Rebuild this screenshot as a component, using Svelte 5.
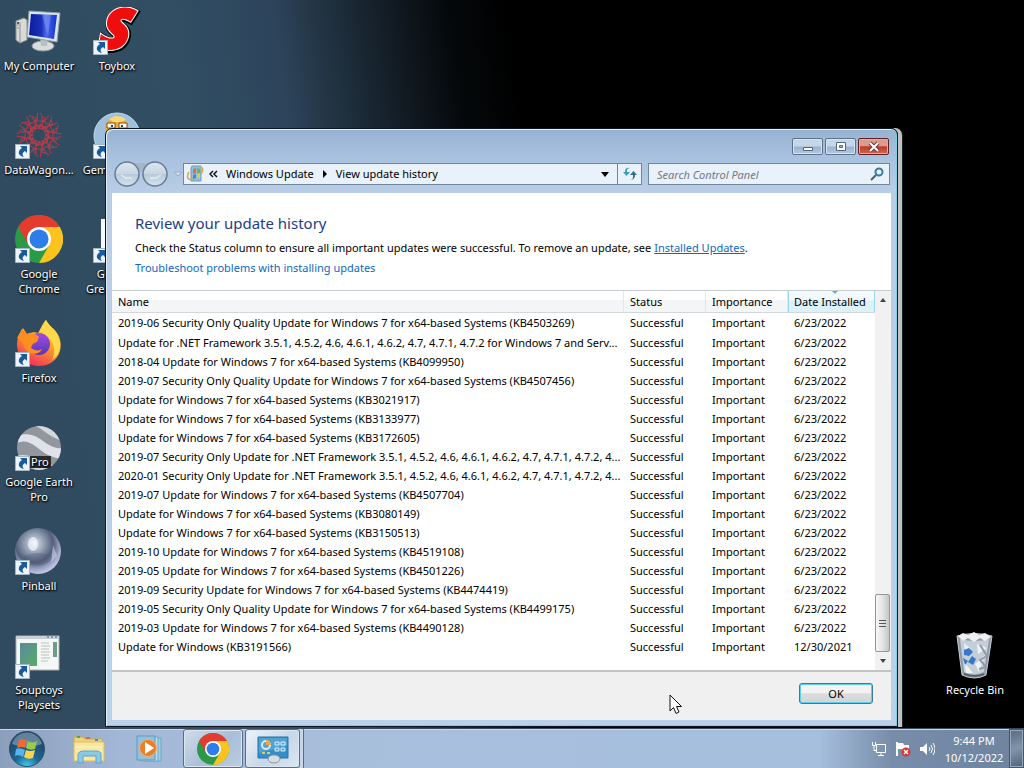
<script>
  let icons = [
    { name: "My Computer", icon: "computer" },
    { name: "DataWagon...", icon: "datawagon", shortcut: true },
    { name: "Google Chrome", icon: "chrome", shortcut: true },
    { name: "Firefox", icon: "firefox", shortcut: true },
    { name: "Google Earth Pro", icon: "earth", shortcut: true },
    { name: "Pinball", icon: "pinball", shortcut: true },
    { name: "Souptoys Playsets", icon: "souptoys", shortcut: true },
    { name: "Toybox", icon: "toybox", shortcut: true },
    { name: "Gemsweeper", icon: "gem", shortcut: true },
    { name: "Genesis Greatest Hit", icon: "page", shortcut: true },
  ];

  let names = [
    "2019-06 Security Only Quality Update for Windows 7 for x64-based Systems (KB4503269)",
    "Update for .NET Framework 3.5.1, 4.5.2, 4.6, 4.6.1, 4.6.2, 4.7, 4.7.1, 4.7.2 for Windows 7 and Serv...",
    "2018-04 Update for Windows 7 for x64-based Systems (KB4099950)",
    "2019-07 Security Only Quality Update for Windows 7 for x64-based Systems (KB4507456)",
    "Update for Windows 7 for x64-based Systems (KB3021917)",
    "Update for Windows 7 for x64-based Systems (KB3133977)",
    "Update for Windows 7 for x64-based Systems (KB3172605)",
    "2019-07 Security Only Update for .NET Framework 3.5.1, 4.5.2, 4.6, 4.6.1, 4.6.2, 4.7, 4.7.1, 4.7.2, 4...",
    "2020-01 Security Only Update for .NET Framework 3.5.1, 4.5.2, 4.6, 4.6.1, 4.6.2, 4.7, 4.7.1, 4.7.2, 4...",
    "2019-07 Update for Windows 7 for x64-based Systems (KB4507704)",
    "Update for Windows 7 for x64-based Systems (KB3080149)",
    "Update for Windows 7 for x64-based Systems (KB3150513)",
    "2019-10 Update for Windows 7 for x64-based Systems (KB4519108)",
    "2019-05 Update for Windows 7 for x64-based Systems (KB4501226)",
    "2019-09 Security Update for Windows 7 for x64-based Systems (KB4474419)",
    "2019-05 Security Only Quality Update for Windows 7 for x64-based Systems (KB4499175)",
    "2019-03 Update for Windows 7 for x64-based Systems (KB4490128)",
    "Update for Windows (KB3191566)",
  ];

  let updates = names.map((name, i) => ({
    name,
    status: "Successful",
    importance: "Important",
    date: i == names.length - 1 ? "12/30/2021" : "6/23/2022",
  }));

  let search = "";
</script>

{#snippet chrome()}
  <circle cx="24" cy="24" r="24" fill="#2a9a48" />
  <path d="M24 12H44.800A24 24 0 0 1 24 48L34.400 30Z" fill="#fcc31e" />
  <path d="M3.200 12A24 24 0 0 1 44.800 12H24L13.600 30Z" fill="#e33b2e" />
  <circle cx="24" cy="24" r="12" fill="#fff" />
  <circle cx="24" cy="24" r="9.500" fill="#2f7de8" />
{/snippet}

{#snippet art(kind)}
  {#if kind == "computer"}
    <path d="M1 14 9 11 12 13V33L5 36 1 33Z" fill="#d8dad8" stroke="#8b9093" />
    <path d="M5 15V36M2 18H4M2 21H4" stroke="#899094" />
    <circle cx="3" cy="16" r="1" fill="#333" />
    <ellipse cx="28" cy="39" rx="11" ry="5" fill="#d9dddd" stroke="#929a9e" />
    <path d="M25 30H33L32 39H26Z" fill="#b9c0c3" />
    <path d="M14 4 45 6 42 35 12 30Z" fill="#dce5e9" stroke="#8fa2ae" />
    <path d="M16 7 42 8 39 32 14 28Z" fill="url(#screen)" />
    <path d="M27 8 36 8 33 29Z" fill="#aebdff" opacity=".35" />
  {:else if kind == "toybox"}
    <g transform="skewX(-10)">
      <text x="14" y="42" class="logo-s shade">S</text>
      <text x="13" y="41" class="logo-s rim">S</text>
      <text x="13" y="41" class="logo-s">S</text>
    </g>
  {:else if kind == "datawagon"}
    <g fill="none" stroke="#b33b4a" stroke-width="1">
      {#each [0, 30, 60, 90, 120, 150, 180, 210, 240, 270, 300, 330] as angle}
        <path d="M24 17 30 8 25 2M18 9 29 11 34 4M24 17 17 6M19 14 31 16M20 19 27 13" transform="rotate({angle} 24 24)" />
      {/each}
    </g>
  {:else if kind == "chrome"}
    {@render chrome()}
  {:else if kind == "firefox"}
    <path d="M31 1C34 7 39 9 42 14C46 20 47 28 44 35C40 43 33 47 24 47C12 47 2 38 2 25C2 20 4 15 8 9L12 15C17 13 20 13 23 14C26 10 27 5 31 1Z" fill="url(#fox)" />
    <circle cx="24" cy="25" r="11" fill="url(#purple)" />
    <path d="M2 19 7 10 12 15C17 13 21 15 24 18L22 23C18 24 17 26 16 29C20 32 24 32 27 30C24 36 16 36 12 32C8 29 9 23 6 22Z" fill="#ff8e20" />
    <path d="M31 1C34 8 42 12 44 20C47 28 44 37 37 41C42 31 38 22 31 16C26 14 25 11 24 13C26 8 29 6 31 1Z" fill="#ffd84b" />
  {:else if kind == "earth"}
    <clipPath id="globe"><circle cx="24" cy="25" r="22" /></clipPath>
    <g clip-path="url(#globe)">
      <path d="M0 0H48V48H0Z" fill="#92979d" />
      <path d="M0 13C12 9 20 12 28 18S42 26 48 25V36C34 35 27 28 20 23S8 17 0 21Z" fill="#dfe3e9" />
      <path d="M17 2C27 4 33 14 48 18V8L30 0Z" fill="#d3d8df" />
      <path d="M0 33C12 30 18 34 26 39S40 42 48 38V48H0Z" fill="#d8dce2" />
    </g>
    <path d="M15 33H36V45H15Z" fill="#292b2c" />
    <text x="16" y="43" class="pro">Pro</text>
  {:else if kind == "pinball"}
    <circle cx="23" cy="24" r="23" fill="url(#ball)" />
    <path d="M8 30C18 24 29 26 38 29C35 40 14 43 8 30Z" fill="#4b5873" opacity=".35" />
    <path d="M38 18 42 29 36 35Z" fill="#c8d0e8" opacity=".6" />
    <ellipse cx="18" cy="17" rx="5" ry="7" fill="#fff" opacity=".6" />
  {:else if kind == "souptoys"}
    <path d="M1 5H44V39H1Z" fill="#f5f7f5" stroke="#a8afb2" />
    <path d="M2 5H44V8H2Z" fill="#c6d0d6" />
    <path d="M32 6H34M36 6H38M40 6H42" stroke="#505b65" />
    <path d="M5 12H22V35H5Z" fill="url(#picture)" />
    <path d="M26 12H34M26 15H35M26 18H34M26 21H35M26 24H34M26 27H35M26 30H33" stroke="#bcc1be" />
    <path d="M38 11H42V26H38Z" fill="#6e9c86" />
  {:else if kind == "gem"}
    <circle cx="24" cy="25" r="23" fill="#9fc0dc" stroke="#c5dceb" />
    <path d="M12 18C13 2 36 0 36 20L31 28H16Z" fill="#ecae36" />
    <path d="M16 8 22 5 30 6 33 9 28 11 20 11Z" fill="#f8d879" />
    <path d="M14 12H22V17H14ZM26 12H34V17H26Z" fill="#fff" stroke="#8b4615" />
    <circle cx="19" cy="15" r="1" /><circle cx="29" cy="15" r="1" />
  {:else if kind == "page"}
    <path d="M8 4H36V44H8Z" fill="#f8f9fb" />
  {:else if kind == "bin"}
    <path d="M6 5 11 44Q24 50 35 44L41 5Q24 0 6 5Z" fill="#8f9ba5" stroke="#c5cbcf" />
    <path d="M9 8 13 41Q23 46 33 41L38 8Q24 12 9 8Z" fill="#c3ced8" />
    <path d="M7 5 12 2 17 4 23 1 28 4 34 2 40 6 34 10 29 7 23 11 17 7 12 10Z" fill="#eef1f2" />
    <path d="M13 12 20 18 15 26ZM26 13 36 17 27 23ZM13 31 22 42 15 42ZM34 24 28 41 24 33Z" fill="#edf2f6" />
    <path d="M29 14 36 25 29 29 35 36 28 38" fill="none" stroke="#8e9da8" stroke-width="2" />
    <path d="M13 19 18 17 22 21 18 25 13 24ZM21 25 25 28 22 34 17 31ZM12 27 17 30 14 34Z" fill="#3976c8" />
    <path d="M13 43Q24 47 33 43" fill="none" stroke="#5c646a" stroke-width="2" />
  {/if}
{/snippet}

{#snippet desktopIcon(item)}
  <button class="desktop-icon">
    <svg width="48" height="48" viewBox="0 0 48 48" aria-hidden="true">
      {@render art(item.icon)}
      {#if item.shortcut}
        <path d="M.5 33.500H14.500V47.500H.5Z" fill="#eef4fa" stroke="#a4b5c6" />
        <path d="M5 35H12V42L10 40C7 42 7 44 9 46C3 45 2 40 7 37Z" fill="#195a9c" />
      {/if}
    </svg>
    <span>{item.name}</span>
  </button>
{/snippet}

<svg class="defs" width="0" height="0" aria-hidden="true">
  <defs>
    <linearGradient id="screen"><stop stop-color="#0b1b9c" /><stop offset=".45" stop-color="#1b32b9" /><stop offset=".6" stop-color="#4a68e6" /><stop offset="1" stop-color="#1332d0" /></linearGradient>
    <linearGradient id="fox" x1=".8" x2=".3" y2="1"><stop stop-color="#fff14d" /><stop offset=".5" stop-color="#ff9a25" /><stop offset="1" stop-color="#f52b61" /></linearGradient>
    <linearGradient id="purple" x2="0" y2="1"><stop stop-color="#a44be2" /><stop offset="1" stop-color="#5539b5" /></linearGradient>
    <radialGradient id="ball" cx=".42" cy=".34" r=".66"><stop stop-color="#e4eaf3" /><stop offset=".3" stop-color="#98a4b8" /><stop offset=".62" stop-color="#525f7a" /><stop offset=".85" stop-color="#9fa5c9" /><stop offset="1" stop-color="#c0c6e2" /></radialGradient>
    <linearGradient id="picture" x2="1" y2="1"><stop stop-color="#5b89a1" /><stop offset="1" stop-color="#59ac64" /></linearGradient>
    <radialGradient id="orb" cx=".5" cy="1" r=".9"><stop stop-color="#3fd0ee" /><stop offset=".4" stop-color="#1d6795" /><stop offset="1" stop-color="#1f4360" /></radialGradient>
    <linearGradient id="nav" x2="0" y2="1"><stop stop-color="#dde6ee" /><stop offset=".48" stop-color="#c9d6e3" /><stop offset=".52" stop-color="#b9cad9" /><stop offset="1" stop-color="#d4e2ed" /></linearGradient>
  </defs>
</svg>

<div class="screen">
  <main class="desktop">
    <div class="icon-grid">
      {#each icons as item}
        {@render desktopIcon(item)}
      {/each}
    </div>
    <div class="icon-grid right">
      {@render desktopIcon({ name: "Recycle Bin", icon: "bin" })}
    </div>

    <section class="window" aria-label="View update history">
      <header class="titlebar">
        <button aria-label="Minimize"><svg width="14" height="12"><path d="M2.500 6.500H11.500V9.500H2.500Z" fill="#fff" stroke="#56677b" /></svg></button>
        <button aria-label="Maximize"><svg width="14" height="12"><path d="M2.500 1.500H11.500V9.500H2.500Z" fill="#fff" stroke="#56677b" /><path d="M5.500 4.500H8.500V6.500H5.500Z" fill="#9eb7d3" stroke="#56677b" /></svg></button>
        <button class="close" aria-label="Close"><svg width="14" height="12"><path d="M3 2 11 10M11 2 3 10" stroke="#6d3a40" stroke-width="4" /><path d="M3 2 11 10M11 2 3 10" stroke="#fff" stroke-width="2" /></svg></button>
      </header>

      <nav class="navbar">
        <div class="history">
          <button aria-label="Back and forward">
            <svg width="54" height="26" aria-hidden="true">
              <path d="M13 2H41V8L27 11 13 8Z" fill="#a3b6ca" />
              <circle cx="13" cy="13" r="12" fill="url(#nav)" stroke="#667d96" stroke-width="1.500" />
              <circle cx="41" cy="13" r="12" fill="url(#nav)" stroke="#667d96" stroke-width="1.500" />
              <path d="M7 14 12 17H18M47 14 42 17H36" fill="none" stroke="#dbe5ee" stroke-width="2" />
            </svg>
          </button>
          <button aria-label="Recent pages"><svg width="10" height="6"><path d="M1.500 1H8.500L5 5Z" fill="#d4e0ed" stroke="#9bacc1" /></svg></button>
        </div>
        <div class="address">
          <svg width="18" height="18" viewBox="0 0 18 18" aria-hidden="true">
            <path d="M6 1H15V16H5V3Z" fill="#91bdde" stroke="#6d9cc3" />
            <path d="M7 4 10 3V8L7 9Z" fill="#d67439" /><path d="M11 3 14 4V8L11 8Z" fill="#71b447" />
            <path d="M7 10 10 9V13L7 14Z" fill="#408ec5" /><path d="M11 9H14V13H11Z" fill="#eac741" />
            <path d="M7 14C2 16 0 12 3 7M13 2C17 2 18 5 15 9" fill="none" stroke="#e5a646" stroke-width="1.500" />
          </svg>
          <button class="crumb" aria-label="Parent folders"><svg width="9" height="8"><path d="M4 1 1 4 4 7M8 1 5 4 8 7" fill="none" stroke="#111" stroke-width="1.500" /></svg></button>
          <button class="crumb">Windows Update</button>
          <svg width="6" height="8" aria-hidden="true"><path d="M1 0 5 4 1 8Z" /></svg>
          <button class="crumb">View update history</button>
          <button class="drop" aria-label="Previous locations"><svg width="8" height="5"><path d="M0 0H8L4 5Z" /></svg></button>
          <button class="refresh" aria-label="Refresh">
            <svg width="14" height="14">
              <path d="M7 1Q4 1 4 4V5H7L3.500 9 0 5H2Q2 0 7 1Z" fill="#3b9cc4" />
              <path d="M7 13Q10 13 10 10V8H7L10.500 4 14 8H12Q12 13 7 13Z" fill="#2d6d9b" />
            </svg>
          </button>
        </div>
        <label class="search">
          <input type="search" aria-label="Search Control Panel" placeholder="Search Control Panel" bind:value={search} />
          <svg width="14" height="14" aria-hidden="true"><circle cx="9" cy="5" r="3.500" fill="#e5f2fb" stroke="#3a7c99" stroke-width="2" /><path d="M6 8 1 13" stroke="#3b6685" stroke-width="2" /></svg>
        </label>
      </nav>

      <div class="content">
        <div class="intro">
          <h1>Review your update history</h1>
          <p>Check the Status column to ensure all important updates were successful. To remove an update, see <a class="underlined" href="#installed">Installed Updates</a>.</p>
          <p><a href="#troubleshoot">Troubleshoot problems with installing updates</a></p>
        </div>
        <div class="list">
          <table>
            <colgroup><col /><col class="mid" /><col class="mid" /><col class="date" /></colgroup>
            <thead>
              <tr>
                <th>Name</th>
                <th>Status</th>
                <th>Importance</th>
                <th class="sorted" aria-sort="descending">Date Installed</th>
              </tr>
            </thead>
            <tbody>
              {#each updates as update}
                <tr>
                  <td>{update.name}</td>
                  <td>{update.status}</td>
                  <td>{update.importance}</td>
                  <td>{update.date}</td>
                </tr>
              {/each}
            </tbody>
          </table>
          <div class="scrollbar">
            <button aria-label="Scroll up"><svg width="8" height="4"><path d="M1 4 4 0 7 4Z" fill="#444" /></svg></button>
            <div class="thumb"><i></i><i></i><i></i></div>
            <button aria-label="Scroll down"><svg width="8" height="4"><path d="M1 0H7L4 4Z" fill="#444" /></svg></button>
          </div>
        </div>
        <footer><button class="ok">OK</button></footer>
      </div>
    </section>
  </main>

  <footer class="taskbar">
    <button class="start" aria-label="Start">
      <svg width="38" height="38" viewBox="0 0 38 38">
        <circle cx="19" cy="19" r="17.500" fill="url(#orb)" stroke="#304e68" />
        <path d="M4 14A15.500 15.500 0 0 1 34 14Q19 20 4 14Z" fill="#c4dfec" opacity=".4" />
        <path d="M11 10Q15 8 19 11L17 18Q13 16 9 18Z" fill="#ee6a31" />
        <path d="M20 11Q24 14 29 11L27 19Q22 21 18 18Z" fill="#9acb49" />
        <path d="M8 19Q12 17 17 20L15 27Q11 24 7 26Z" fill="#5bb3eb" />
        <path d="M18 20Q22 22 27 20L25 28Q20 30 16 27Z" fill="#fbd44c" />
      </svg>
    </button>
    <button class="task" aria-label="Windows Explorer">
      <svg width="34" height="32" viewBox="0 0 34 32">
        <path d="M2 4H11L13 6H30V27H2Z" fill="#eed27d" stroke="#cda950" />
        <path d="M5 3H8V5H5Z" fill="#49a852" /><path d="M14 4H18V6H14Z" fill="#d66b4c" /><path d="M23 6H26V8H23Z" fill="#4a8cc4" />
        <path d="M2 9H32V28H2Z" fill="#f7e7a0" stroke="#ddbe62" />
        <path d="M4 14H30M4 18H30" stroke="#fff5c9" />
        <path d="M6 30V21Q7 18 11 18H24Q29 18 29 21V30H24V23H11V30Z" fill="#8bc8e5" stroke="#5da4c8" />
      </svg>
    </button>
    <button class="task" aria-label="Windows Media Player">
      <svg width="26" height="28" viewBox="0 0 26 28">
        <path d="M9 3H25V26H9Z" fill="#a1cce4" stroke="#6ca6ca" /><path d="M5 2H22V26H5Z" fill="#bbdbeb" stroke="#71aacd" /><path d="M1 1H19V25H1Z" fill="#93c0dd" stroke="#5c99c2" />
        <circle cx="12" cy="13" r="8.500" fill="#eb7e28" stroke="#f3b376" /><path d="M9 7 18 13 9 19Z" fill="#fff" />
      </svg>
    </button>
    <button class="task open" aria-label="Google Chrome"><svg width="32" height="32" viewBox="0 0 48 48">{@render chrome()}</svg></button>
    <button class="task open active" aria-label="Control Panel">
      <svg width="32" height="30" viewBox="0 0 32 30">
        <path d="M1 3H31V24H1Z" fill="#368ec8" stroke="#2676a9" /><path d="M2 4H30V12L2 19Z" fill="#63b2dc" opacity=".6" />
        <circle cx="9" cy="11" r="4" fill="none" stroke="#d6eef7" stroke-width="2" /><path d="M9 11V6A5 5 0 0 1 14 11Z" fill="#f4a544" />
        <path d="M18 8H22V11H18ZM24 8H28V11H24ZM18 14H22V17H18ZM24 14H28V17H24Z" fill="#5ba8d3" stroke="#d8effc" />
        <path d="M5 19H8M10 19H13" stroke="#e7c85d" stroke-width="2" />
        <ellipse cx="17" cy="25" rx="6" ry="4" fill="#d9dce0" stroke="#8d969d" />
      </svg>
    </button>
    <span class="stack"></span>
    <div class="tray">
      <button aria-label="Network"><svg width="16" height="16"><path d="M5.500 3.500H14.500V11.500H5.500ZM7 14.500H13M10 11.500V14.500M1.500 1V4.500H4.500V1M3 4.500V9.500H5" fill="none" stroke="#fff" /></svg></button>
      <button aria-label="Action Center"><svg width="16" height="16"><path d="M2 1V15" stroke="#fff" stroke-width="2" /><path d="M3 2H8L9 4H14V10H8L7 8H3Z" fill="#fff" /><circle cx="11" cy="11" r="4.500" fill="#d83535" /><path d="M9 9 13 13M13 9 9 13" stroke="#fff" stroke-width="1.500" /></svg></button>
      <button aria-label="Volume"><svg width="16" height="16"><path d="M1 6H4L8 2V14L4 10H1Z" fill="#fff" /><path d="M10 6Q12 8 10 10M12 4Q15 8 12 12M14 2Q18 8 14 14" fill="none" stroke="#fff" /></svg></button>
    </div>
    <button class="clock"><span>9:44 PM</span><span>10/12/2022</span></button>
    <button class="show-desktop" aria-label="Show desktop"></button>
  </footer>

  <svg class="cursor" width="14" height="21" aria-hidden="true"><path d="M1 1V17L4.500 13.500 7 19.500 10 18 7.500 12.500H12.500Z" fill="#fff" stroke="#111" /></svg>
</div>

<style>
  :global(body) {
    overflow: hidden;
    font-family: "Noto Sans", "Open Sans", sans-serif;
    font-size: 11px;
  }
  button {
    font: inherit;
    color: inherit;
    padding: 0;
    border: 0;
    background: none;
  }
  svg {
    display: block;
    flex: none;
  }
  .defs {
    position: absolute;
  }
  .screen {
    height: 100vh;
    display: flex;
    flex-direction: column;
    position: relative;
    background: linear-gradient(82deg, #304a5f 0, #314e63 280px, #2d445b 375px, #20313f 430px, #101820 500px, #05080a 550px, #000 610px);
  }
  .desktop {
    flex: 1;
    min-height: 0;
    display: flex;
    justify-content: space-between;
    position: relative;
  }

  /* desktop icons */
  .icon-grid {
    display: grid;
    grid-template-rows: repeat(7, 104px);
    grid-auto-columns: 78px;
    grid-auto-flow: column;
  }
  .icon-grid.right {
    padding-right: 10px;
    align-content: end;
    grid-template-rows: 104px;
  }
  .desktop-icon {
    display: flex;
    flex-direction: column;
    align-items: center;
    gap: 3px;
    padding-top: 7px;
    color: #fff;
    line-height: 15px;
    text-shadow: 1px 1px 2px #000, 0 1px 2px #000;
  }
  .logo-s {
    font: italic 900 54px "Open Sans", sans-serif;
    fill: #f00d0d;
    stroke: #f00d0d;
    stroke-width: 3px;
    text-shadow: none;
  }
  .logo-s.rim {
    stroke: #fff;
    stroke-width: 5px;
  }
  .logo-s.shade {
    fill: #000;
    stroke: #000;
    stroke-width: 7px;
  }
  .pro {
    font-size: 11px;
    fill: #fff;
  }

  /* window */
  .window {
    position: absolute;
    top: 128px;
    right: 126px;
    bottom: 1px;
    left: 105px;
    display: flex;
    flex-direction: column;
    padding: 0 6px 6px;
    border: 1px solid #101820;
    border-radius: 7px 7px 0 0;
    background: linear-gradient(#97b3d2 0, #a9c2df 30px, #b9cde5 62px, #b9d1ea 100%);
    box-shadow: inset 1px 1px #e3eef8, inset -1px -1px #77d0e8, 4px 0 #bfc3c5, 5px 0 #222;
  }
  .titlebar {
    height: 34px;
    box-sizing: border-box;
    display: flex;
    justify-content: flex-end;
    align-items: flex-start;
    gap: 2px;
    padding: 9px 2px 0;
  }
  .titlebar button {
    width: 31px;
    height: 17px;
    display: grid;
    place-items: center;
    border: 1px solid #5d728b;
    border-radius: 2px;
    background: linear-gradient(#c5d6e9 48%, #98b2cf 52%, #b3cae3);
    box-shadow: inset 0 0 0 1px #d5e2f0;
  }
  .titlebar .close {
    border-color: #5c2228;
    background: linear-gradient(#dc9b8d 45%, #bd3b28 52%, #d4684c);
    box-shadow: inset 0 0 0 1px #e7aaa0;
  }
  .navbar {
    height: 30px;
    display: flex;
    align-items: flex-start;
    padding: 0 1px 0 2px;
  }
  .history {
    width: 69px;
    display: flex;
    align-items: center;
    justify-content: space-between;
    height: 22px;
  }
  .address,
  .search {
    height: 22px;
    box-sizing: border-box;
    display: flex;
    align-items: center;
    border: 1px solid #70859e;
    background: #e9f1fa;
  }
  .address {
    flex: 1;
    gap: 8px;
  }
  .address > svg:first-child {
    margin-left: 2px;
    margin-right: -3px;
  }
  .crumb {
    white-space: nowrap;
    line-height: 20px;
  }
  .drop {
    margin-left: auto;
  }
  .refresh {
    width: 24px;
    height: 20px;
    display: grid;
    place-items: center;
    border-left: 1px solid #70859e;
  }
  .search {
    width: 242px;
    margin-left: 6px;
    padding: 0 5px 0 8px;
  }
  .search input {
    flex: 1;
    min-width: 0;
    height: 18px;
    border: 0;
    padding: 0;
    outline: 0;
    background: none;
    font: inherit;
  }
  .search input::placeholder {
    font-style: italic;
    color: #737a82;
  }
  .content {
    flex: 1;
    min-height: 0;
    display: flex;
    flex-direction: column;
    background: #fff;
  }
  .intro {
    height: 97px;
    box-sizing: border-box;
    padding: 18px 23px 0;
  }
  h1 {
    margin: 0 0 3px;
    font-size: 15px;
    font-weight: 400;
    line-height: 24px;
    color: #1d3d86;
  }
  p {
    margin: 0;
    line-height: 20px;
  }
  a {
    color: #0f67bf;
    text-decoration: none;
  }
  a.underlined {
    text-decoration: underline;
  }
  .list {
    flex: 1;
    min-height: 0;
    display: flex;
    align-items: flex-start;
    border-top: 1px solid #c7ccd1;
    border-bottom: 2px solid #c4c4c4;
  }
  table {
    flex: 1;
    width: 0;
    table-layout: fixed;
    border-collapse: separate;
    border-spacing: 0;
  }
  .mid {
    width: 82px;
  }
  .date {
    width: 87px;
  }
  th,
  td {
    padding: 0 0 0 6px;
    text-align: left;
    font-weight: 400;
    line-height: 18px;
    white-space: nowrap;
    overflow: hidden;
    text-overflow: ellipsis;
  }
  th {
    height: 21px;
    border-right: 1px solid #e4e6e8;
    border-bottom: 1px solid #d5d8db;
    background: linear-gradient(#fff 40%, #f4f5f6 45%);
  }
  th.sorted {
    position: relative;
    border-left: 1px solid #96d9f0;
    border-right-color: #96d9f0;
    padding-left: 5px;
    background: linear-gradient(#f2fafd 40%, #dcf1fa 50%);
  }
  th.sorted::before {
    content: "";
    position: absolute;
    top: 0;
    left: 50%;
    border: 3px solid transparent;
    border-top-color: #8da3ae;
    border-bottom: 0;
  }
  td {
    height: 19px;
  }
  tbody tr:first-child td {
    height: 20px;
  }
  .scrollbar {
    align-self: stretch;
    width: 16px;
    display: flex;
    flex-direction: column;
    background: #f1f1f1;
  }
  .scrollbar button {
    height: 18px;
    display: grid;
    place-items: center;
  }
  .thumb {
    height: 58px;
    box-sizing: border-box;
    margin: auto 1px 0 0;
    display: flex;
    flex-direction: column;
    align-items: center;
    justify-content: center;
    gap: 2px;
    border: 1px solid #969696;
    border-radius: 2px;
    background: linear-gradient(90deg, #f8f8f8, #e3e3e3 50%, #c5c5c5);
  }
  .thumb i {
    width: 7px;
    height: 1px;
    background: #555;
  }
  .content footer {
    height: 48px;
    box-sizing: border-box;
    display: flex;
    justify-content: flex-end;
    padding: 11px 18px 0;
    background: #f0f0f0;
  }
  .ok {
    width: 74px;
    height: 21px;
    border: 1px solid #377c9c;
    border-radius: 3px;
    background: linear-gradient(#f3f3f3 45%, #dcdcdc 52%, #d2d5d6);
    box-shadow: inset 0 0 0 1px #5dcdf0;
  }

  /* taskbar */
  .taskbar {
    height: 40px;
    box-sizing: border-box;
    display: flex;
    align-items: stretch;
    border-top: 1px solid #3b4c60;
    background: linear-gradient(90deg, #8b9fbc 0, #a3b8d6 12%, #a8bfdc 35%, #a6bfdd 80%, #778da9 87%, #6e839e 100%);
    box-shadow: inset 0 1px #cad9ea;
  }
  .start {
    width: 54px;
    display: grid;
    place-items: center;
  }
  .task {
    width: 60px;
    display: grid;
    place-items: center;
  }
  .start + .task {
    margin-left: 5px;
  }
  .task + .open {
    margin-left: 4px;
  }
  .open {
    border: 1px solid #596d88;
    border-radius: 3px;
    background: linear-gradient(135deg, #d2ddeb, #a9bdd7 55%, #bccde1);
    box-shadow: inset 0 0 0 1px #dbe6f2;
  }
  .open + .open {
    width: 55px;
    margin-left: 2px;
  }
  .active {
    background: linear-gradient(135deg, #eef3f8, #c7d7e8 55%, #dbe7f2);
  }
  .stack {
    width: 3px;
    border-right: 1px solid #596d88;
    background: #c8d6e7;
  }
  .tray {
    margin-left: auto;
    display: flex;
    align-items: center;
    gap: 8px;
  }
  .clock {
    width: 74px;
    display: flex;
    flex-direction: column;
    justify-content: center;
    padding-left: 4px;
    line-height: 17px;
    text-align: center;
    color: #fff;
  }
  .show-desktop {
    width: 15px;
    border: 1px solid #44566c;
    background: linear-gradient(160deg, #586a7e, #8194a9 50%, #4f6278);
    box-shadow: inset 0 0 0 1px #95a8bc;
  }
  .cursor {
    position: absolute;
    left: 669px;
    top: 694px;
  }
</style>
